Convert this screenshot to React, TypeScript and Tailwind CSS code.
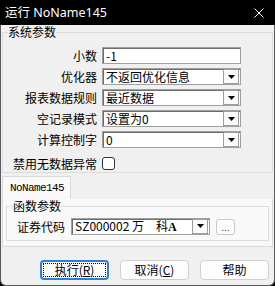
import React from 'react';

const rows: { label: string; value: string; select: boolean }[] = [
  { label: '小数', value: '-1', select: false },
  { label: '优化器', value: '不返回优化信息', select: true },
  { label: '报表数据规则', value: '最近数据', select: true },
  { label: '空记录模式', value: '设置为0', select: true },
  { label: '计算控制字', value: '0', select: true },
];

function DropButton() {
  return (
    <span className="mr-[1px] flex h-[15px] w-[16px] shrink-0 items-center justify-center border border-[#9c9c9c] bg-[#fbfbfb]">
      <svg width="7" height="4" viewBox="0 0 7 4">
        <path d="M0 0h7L3.5 4z" fill="#000" />
      </svg>
    </span>
  );
}

function Field({ value, select, width }: { value: React.ReactNode; select: boolean; width: string }) {
  return (
    <div
      className={`flex h-[17px] items-center border border-[#a0a0a0] bg-white pl-[3px] shadow-[inset_1px_1px_0_#6d6d6d] ${width}`}
    >
      <span className="flex-1 truncate leading-[15px]">{value}</span>
      {select && <DropButton />}
    </div>
  );
}

function DialogButton({ children, primary }: { children: React.ReactNode; primary?: boolean }) {
  if (primary) {
    return (
      <button className="flex h-[20px] w-[69px] items-center justify-center rounded-[4px] border-2 border-[#2f7fd6] bg-[#fdfdfd] p-[1px]">
        <span className="flex h-full w-full items-center justify-center border border-dotted border-black leading-[12px]">
          {children}
        </span>
      </button>
    );
  }
  return (
    <button className="flex h-[20px] w-[69px] items-center justify-center rounded-[4px] border border-[#d0d0d0] bg-[#fdfdfd] leading-[12px]">
      {children}
    </button>
  );
}

export default function App() {
  return (
    <div className='flex h-[286px] w-[275px] flex-col bg-black font-["Noto_Sans_CJK_SC","Noto_Sans",sans-serif] text-[12px] leading-[17px] text-black'>
      {/* title bar */}
      <div className='flex h-[25px] shrink-0 items-center justify-between pl-[5px] pr-[11px] font-["Noto_Sans","Noto_Sans_CJK_SC",sans-serif] text-[12.5px] text-white'>
        <span>运行 NoName145</span>
        <svg width="10" height="10" viewBox="0 0 10 10">
          <path d="M0.5 0.5L9.5 9.5M9.5 0.5L0.5 9.5" stroke="#fff" strokeWidth="1" />
        </svg>
      </div>

      <div className="flex flex-1 flex-col rounded-b-[6px] border-x border-b border-[#5a5a5a] bg-[#f0f0f0]">
        {/* 系统参数 */}
        <fieldset className="mx-[1px] border border-[#dcdcdc] pb-[2px] pt-[8px]">
          <legend className="ml-[5px] leading-[14px]">系统参数</legend>
          <div className="flex flex-col gap-[4px]">
            {rows.map((r) => (
              <div key={r.label} className="flex h-[17px] items-center gap-[5px]">
                <span className="w-[94px] text-right">{r.label}</span>
                <Field value={r.value} select={r.select} width="w-[139px]" />
              </div>
            ))}
            <div className="mt-[4px] flex h-[14px] items-center gap-[5px]">
              <span className="w-[94px] text-right">禁用无数据异常</span>
              <span className="h-[13px] w-[13px] rounded-[3px] border border-[#333] bg-white" />
            </div>
          </div>
        </fieldset>

        {/* tab */}
        <div className="mt-[3px] flex">
          <div className='ml-[1px] flex h-[23px] w-[69px] items-center border-x border-t border-[#d9d9d9] bg-[#f9f9f9] pl-[7px] font-["Liberation_Mono",monospace] text-[11px] tracking-[-0.6px]'>
            NoName145
          </div>
        </div>
        <div className="mx-[1px] h-[48px] border border-t-0 border-[#d9d9d9] bg-[#f9f9f9] px-[3px]">
          <fieldset className="border border-[#dcdcdc] pb-[5px] pt-[4px]">
            <legend className="ml-[6px] leading-[14px]">函数参数</legend>
            <div className="flex items-center">
              <span className="ml-[10px] w-[48px]">证券代码</span>
              <div className="ml-[6px]">
                <Field
                  value={
                    <>
                      SZ000002 万　科<span className='font-["Liberation_Serif",serif] font-bold'>A</span>
                    </>
                  }
                  select
                  width="w-[139px]"
                />
              </div>
              <span className="ml-[6px] mt-[2px] flex h-[16px] w-[19px] items-end justify-center rounded-[3px] border border-[#c8c8c8] bg-[#fdfdfd] pb-[2px] text-[10px] leading-[10px] text-[#444]">
                ...
              </span>
            </div>
          </fieldset>
        </div>

        {/* buttons */}
        <div className="mt-auto flex justify-end gap-[11px] pb-[5px] pr-[5px]">
          <DialogButton primary>
            执行(<span className="underline">R</span>)
          </DialogButton>
          <DialogButton>
            取消(<span className="underline">C</span>)
          </DialogButton>
          <DialogButton>帮助</DialogButton>
        </div>
      </div>
    </div>
  );
}
